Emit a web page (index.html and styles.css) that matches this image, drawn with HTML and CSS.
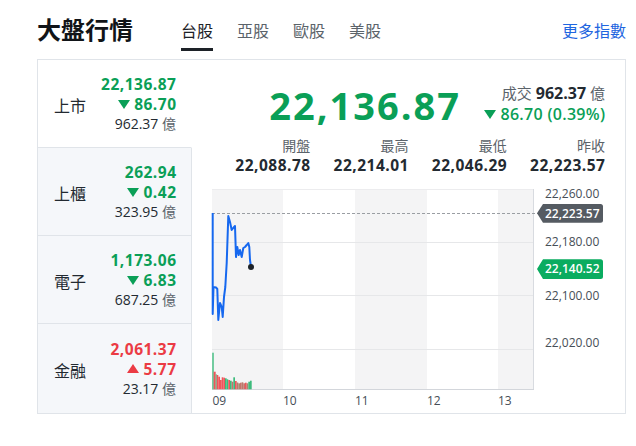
FILE: index.html
```html
<!DOCTYPE html>
<html lang="zh-Hant">
<head>
<meta charset="utf-8">
<title>大盤行情</title>
<link rel="stylesheet" href="styles.css">
</head>
<body>
<div class="page">
  <header class="hdr">
    <h1 class="title">大盤行情</h1>
    <nav class="tabs">
      <a class="tab active">台股</a>
      <a class="tab">亞股</a>
      <a class="tab">歐股</a>
      <a class="tab">美股</a>
    </nav>
    <a class="more">更多指數</a>
  </header>

  <section class="card">
    <ul class="list">
      <li class="item sel">
        <span class="name">上市</span>
        <div class="vals">
          <div class="v down">22,136.87</div>
          <div class="v down"><i class="tri-dn"></i>86.70</div>
          <div class="amt">962.37 <span class="unit">億</span></div>
        </div>
      </li>
      <li class="item">
        <span class="name">上櫃</span>
        <div class="vals">
          <div class="v down">262.94</div>
          <div class="v down"><i class="tri-dn"></i>0.42</div>
          <div class="amt">323.95 <span class="unit">億</span></div>
        </div>
      </li>
      <li class="item">
        <span class="name">電子</span>
        <div class="vals">
          <div class="v down">1,173.06</div>
          <div class="v down"><i class="tri-dn"></i>6.83</div>
          <div class="amt">687.25 <span class="unit">億</span></div>
        </div>
      </li>
      <li class="item last">
        <span class="name">金融</span>
        <div class="vals">
          <div class="v up">2,061.37</div>
          <div class="v up"><i class="tri-up"></i>5.77</div>
          <div class="amt">23.17 <span class="unit">億</span></div>
        </div>
      </li>
    </ul>

    <div class="main">
      <div class="top">
        <div class="big down">22,136.87</div>
        <div class="summary">
          <div class="vol"><span class="lbl">成交</span> <b>962.37</b> <span class="lbl">億</span></div>
          <div class="chg down"><i class="tri-dn"></i>86.70 (0.39%)</div>
        </div>
      </div>

      <div class="stats">
        <div class="stat"><div class="slbl">開盤</div><div class="sval">22,088.78</div></div>
        <div class="stat"><div class="slbl">最高</div><div class="sval">22,214.01</div></div>
        <div class="stat"><div class="slbl">最低</div><div class="sval">22,046.29</div></div>
        <div class="stat"><div class="slbl">昨收</div><div class="sval">22,223.57</div></div>
      </div>

      <svg class="chart" width="393" height="222" viewBox="212 189 393 222" xmlns="http://www.w3.org/2000/svg">
        <!-- hour bands -->
        <rect x="212" y="189" width="71" height="200" fill="#f4f4f5"/>
        <rect x="355" y="189" width="72" height="200" fill="#f4f4f5"/>
        <rect x="498" y="189" width="35" height="200" fill="#f4f4f5"/>
        <!-- grid -->
        <line x1="212" y1="189.5" x2="533" y2="189.5" stroke="#ececee" stroke-width="1"/>
        <line x1="212" y1="242.5" x2="533" y2="242.5" stroke="#e6e7e9" stroke-width="1"/>
        <line x1="212" y1="295.5" x2="533" y2="295.5" stroke="#e6e7e9" stroke-width="1"/>
        <line x1="212" y1="349.5" x2="533" y2="349.5" stroke="#e6e7e9" stroke-width="1"/>
        <line x1="533.5" y1="189" x2="533.5" y2="389" stroke="#d8dbe0" stroke-width="1"/>
        <line x1="212" y1="389.5" x2="534" y2="389.5" stroke="#d3d6db" stroke-width="1"/>
        <!-- previous close -->
        <line x1="212" y1="213.5" x2="540" y2="213.5" stroke="#9a9ea3" stroke-width="1" stroke-dasharray="3 2"/>
        <!-- volume -->
        <g class="vol-bars">
          <rect x="212.3" y="352.7" width="1.4" height="36.6" fill="#3dbb7c"/>
          <rect x="213.7" y="371.7" width="2" height="17.6" fill="#f0555b"/>
          <rect x="215.7" y="374.3" width="1" height="15" fill="#3dbb7c"/>
          <rect x="216.7" y="375" width="1.6" height="14.3" fill="#f0555b"/>
          <rect x="218.3" y="376.7" width="1.7" height="12.6" fill="#f0555b"/>
          <rect x="220" y="380" width="1.7" height="9.3" fill="#f0555b"/>
          <rect x="221.7" y="377.3" width="1.6" height="12" fill="#f0555b"/>
          <rect x="223.3" y="377.7" width="1.7" height="11.6" fill="#f0555b"/>
          <rect x="225" y="378.3" width="1.7" height="11" fill="#3dbb7c"/>
          <rect x="226.7" y="379.3" width="1.6" height="10" fill="#3dbb7c"/>
          <rect x="228.3" y="380" width="1.7" height="9.3" fill="#f0555b"/>
          <rect x="230" y="380.7" width="1.7" height="8.6" fill="#3dbb7c"/>
          <rect x="231.7" y="381.7" width="1.6" height="7.6" fill="#c5736a"/>
          <rect x="233.3" y="377.3" width="1.7" height="12" fill="#3dbb7c"/>
          <rect x="235" y="381" width="1.7" height="8.3" fill="#f0555b"/>
          <rect x="236.7" y="382.5" width="1.6" height="6.8" fill="#b87a6c"/>
          <rect x="238.3" y="383.3" width="1.7" height="6" fill="#a98870"/>
          <rect x="240" y="382.7" width="1.7" height="6.6" fill="#c5736a"/>
          <rect x="241.7" y="382.3" width="1.6" height="7" fill="#b87a6c"/>
          <rect x="243.3" y="383.3" width="1.7" height="6" fill="#c5736a"/>
          <rect x="245" y="382.7" width="1.7" height="6.6" fill="#f0555b"/>
          <rect x="246.7" y="383.3" width="1.6" height="6" fill="#a98870"/>
          <rect x="248.3" y="381.7" width="1.7" height="7.6" fill="#3dbb7c"/>
          <rect x="250" y="380.7" width="1.7" height="8.6" fill="#3dbb7c"/>
        </g>
        <!-- price line -->
        <path d="M212.7,213 L212.7,314 L213.5,287 L216,287.5 L217.3,289 L218.3,320 L220,303 L221.7,307 L222.7,317 L224,297 L225.3,287 L226.7,263 L228.3,216 L230,222 L231.7,230 L233.3,228 L235,226 L236,257 L237.3,247 L238.7,255 L240,250 L241.7,257 L243.3,248 L245,247 L246.7,245 L248.3,243 L249.3,247 L250,260 L251,267"
              fill="none" stroke="#1668ef" stroke-width="2" stroke-linejoin="round"/>
        <circle cx="251" cy="267" r="3" fill="#1d2228"/>
        <!-- y labels -->
        <g class="axis">
          <text x="545" y="198.3">22,260.00</text>
          <text x="545" y="246.3">22,180.00</text>
          <text x="545" y="300">22,100.00</text>
          <text x="545" y="347.3">22,020.00</text>
        </g>
        <!-- tags -->
        <path d="M537,213.3 L543,204 L600.5,204 Q603,204 603,206.5 L603,220.2 Q603,222.7 600.5,222.7 L543,222.7 Z" fill="#555b62"/>
        <text class="tag" x="545" y="217.6">22,223.57</text>
        <path d="M537,269 L543,259.3 L600.5,259.3 Q603,259.3 603,261.8 L603,276.5 Q603,279 600.5,279 L543,279 Z" fill="#0aac60"/>
        <text class="tag" x="545" y="273.4">22,140.52</text>
        <!-- x labels -->
        <g class="axis">
          <text x="212.5" y="404.5">09</text>
          <text x="283" y="404.5">10</text>
          <text x="355" y="404.5">11</text>
          <text x="427" y="404.5">12</text>
          <text x="498" y="404.5">13</text>
        </g>
      </svg>
    </div>
  </section>
</div>
</body>
</html>
```

FILE: styles.css
```css
* { box-sizing: border-box; }

body {
  margin: 0;
  background: #ffffff;
  font-family: "Open Sans", "Noto Sans CJK TC", sans-serif;
  color: #232a31;
}

.page {
  width: 636px;
  padding: 0 10px 0 37px;
}

/* header */
.hdr {
  display: flex;
  align-items: flex-start;
  height: 59px;
}

.title {
  margin: 13px 0 0 0;
  font-size: 24px;
  line-height: 32px;
  font-weight: 700;
  color: #111418;
  font-family: "Noto Sans CJK TC", sans-serif;
}

.tabs {
  display: flex;
  gap: 24px;
  margin-left: 48px;
}

.tab {
  display: block;
  padding-top: 19px;
  padding-bottom: 7px;
  font-size: 16px;
  line-height: 22px;
  color: #5b636a;
  border-bottom: 3px solid transparent;
  font-family: "Noto Sans CJK TC", sans-serif;
}

.tab.active {
  color: #1d2228;
  border-bottom-color: #1d2228;
}

.more {
  margin-left: auto;
  margin-top: 19px;
  font-size: 16px;
  line-height: 22px;
  color: #1f66e0;
  font-family: "Noto Sans CJK TC", sans-serif;
}

/* card */
.card {
  display: grid;
  grid-template-columns: 154px 1fr;
  width: 589px;
  height: 355px;
  border: 1px solid #e0e4e9;
}

.list {
  list-style: none;
  margin: 0;
  padding: 0;
}

.item {
  display: flex;
  align-items: center;
  justify-content: space-between;
  height: 88px;
  padding: 0 15px 0 16px;
  background: #f5f7fa;
  border-right: 1px solid #e0e4e9;
  border-bottom: 1px solid #e0e4e9;
}

.item.sel {
  background: #ffffff;
  border-right-color: #ffffff;
}

.item.last {
  height: 89px;
  border-bottom: none;
}

.name {
  font-size: 16px;
  line-height: 22px;
  color: #232a31;
  margin-top: 2px;
  font-family: "Noto Sans CJK TC", sans-serif;
}

.vals {
  text-align: right;
}

.v {
  font-size: 15.5px;
  line-height: 20px;
  font-weight: 700;
  letter-spacing: 0.5px;
  margin-right: -0.5px;
}

.amt {
  font-size: 14px;
  line-height: 20px;
  color: #232a31;
}

.unit {
  color: #5b636a;
}

.down { color: #0a9f57; }
.up { color: #eb3b44; }

.tri-dn, .tri-up {
  display: inline-block;
  width: 0;
  height: 0;
  border-left: 6px solid transparent;
  border-right: 6px solid transparent;
  margin-right: 4px;
  vertical-align: 1px;
}

.tri-dn { border-top: 9px solid currentColor; }
.tri-up { border-bottom: 9px solid currentColor; vertical-align: 2px; }

/* main */
.main {
  padding: 20px 20px 0 20px;
}

.top {
  display: grid;
  grid-template-columns: 1fr 146px;
  height: 50px;
}

.big {
  text-align: right;
  font-size: 38px;
  line-height: 50px;
  font-weight: 700;
  letter-spacing: 2px;
  margin-right: -2px;
}

.summary {
  text-align: right;
  margin-top: 2px;
}

.vol {
  font-size: 15px;
  line-height: 21px;
  white-space: nowrap;
}

.vol .lbl {
  color: #5b636a;
  font-family: "Noto Sans CJK TC", sans-serif;
}

.vol b {
  font-size: 16px;
  font-weight: 700;
  color: #232a31;
}

.chg {
  font-size: 16px;
  line-height: 21px;
  font-weight: 600;
  white-space: nowrap;
  letter-spacing: 0.3px;
  margin-right: -0.3px;
}

.stats {
  display: grid;
  grid-template-columns: repeat(4, 1fr);
  margin-top: 5px;
}

.stat {
  text-align: right;
}

.slbl {
  font-size: 14px;
  line-height: 20px;
  color: #5b636a;
  font-family: "Noto Sans CJK TC", sans-serif;
}

.sval {
  font-size: 15.5px;
  line-height: 21px;
  font-weight: 700;
  letter-spacing: 0.5px;
  margin-right: -0.5px;
  color: #232a31;
}

.chart {
  display: block;
  margin-top: 13px;
  overflow: visible;
}

.axis text {
  font-family: "Open Sans", sans-serif;
  font-size: 12px;
  fill: #464e56;
}

.tag {
  font-family: "Open Sans", sans-serif;
  font-size: 12px;
  font-weight: 600;
  fill: #ffffff;
}
```
